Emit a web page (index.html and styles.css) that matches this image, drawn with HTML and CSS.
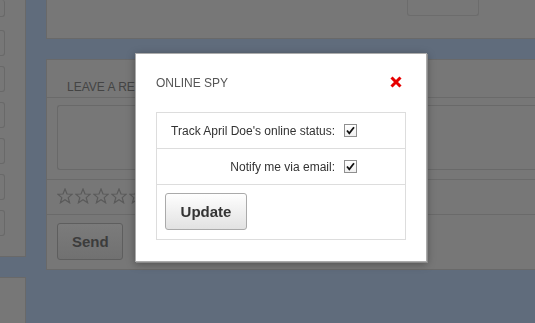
FILE: index.html
```html
<!DOCTYPE html>
<html lang="en">

<head>
    <meta charset="UTF-8">
    <meta name="viewport" content="width=device-width, initial-scale=1.0">
    <title>Online Spy</title>
    <link rel="stylesheet" href="styles.css">
</head>

<body>
    <div class="page">
        <aside class="side">
            <div class="side-panel">
                <div class="field"></div>
                <div class="field"></div>
                <div class="field"></div>
                <div class="field"></div>
                <div class="field"></div>
                <div class="field"></div>
                <div class="field"></div>
            </div>
            <div class="side-panel-low"></div>
        </aside>
        <main class="main">
            <div class="panel panel-top">
                <div class="top-btn"></div>
            </div>
            <div class="panel comments">
                <h3 class="comments-title">Leave a review</h3>
                <div class="comment-box">
                    <div class="textarea"></div>
                </div>
                <div class="stars">
                    <svg class="star" viewBox="0 0 16 16"><polygon points="8,1 10,6 15.2,6.2 11.2,9.6 12.6,14.8 8,11.8 3.4,14.8 4.8,9.6 0.8,6.2 6,6" /></svg>
                    <svg class="star" viewBox="0 0 16 16"><polygon points="8,1 10,6 15.2,6.2 11.2,9.6 12.6,14.8 8,11.8 3.4,14.8 4.8,9.6 0.8,6.2 6,6" /></svg>
                    <svg class="star" viewBox="0 0 16 16"><polygon points="8,1 10,6 15.2,6.2 11.2,9.6 12.6,14.8 8,11.8 3.4,14.8 4.8,9.6 0.8,6.2 6,6" /></svg>
                    <svg class="star" viewBox="0 0 16 16"><polygon points="8,1 10,6 15.2,6.2 11.2,9.6 12.6,14.8 8,11.8 3.4,14.8 4.8,9.6 0.8,6.2 6,6" /></svg>
                    <svg class="star" viewBox="0 0 16 16"><polygon points="8,1 10,6 15.2,6.2 11.2,9.6 12.6,14.8 8,11.8 3.4,14.8 4.8,9.6 0.8,6.2 6,6" /></svg>
                </div>
                <div class="send-row">
                    <button class="btn btn-send">Send</button>
                </div>
            </div>
        </main>
    </div>

    <div class="modal">
        <div class="modal-head">
            <span class="modal-title">Online Spy</span>
            <svg class="close" viewBox="0 0 12 12"><path d="M1.5 1.5 L10.5 10.5 M10.5 1.5 L1.5 10.5" /></svg>
        </div>
        <div class="opts">
            <div class="opt">
                <span class="opt-label">Track April Doe's online status:</span>
                <span class="check"><svg viewBox="0 0 11 11"><path d="M2 5.5 L4.3 8.3 L9 2.3" /></svg></span>
            </div>
            <div class="opt">
                <span class="opt-label">Notify me via email:</span>
                <span class="check"><svg viewBox="0 0 11 11"><path d="M2 5.5 L4.3 8.3 L9 2.3" /></svg></span>
            </div>
            <div class="opt opt-btn">
                <button class="btn btn-update">Update</button>
            </div>
        </div>
    </div>
</body>

</html>
```

FILE: styles.css
```css
body {
    margin: 0;
    background-color: #606c7c;
    font-family: "Liberation Sans", Arial, sans-serif;
}

.page {
    display: grid;
    grid-template-columns: 26px 1fr;
    column-gap: 20px;
    height: 323px;
    overflow: hidden;
}

/* left column, cut off by the window edge */
.side-panel {
    background-color: #777;
    border-right: 1px solid #696969;
    border-bottom: 1px solid #696969;
    height: 257px;
    box-sizing: border-box;
    padding-bottom: 20px;
    display: flex;
    flex-direction: column;
    gap: 10px;
}

.side-panel-low {
    margin-top: 20px;
    height: 46px;
    box-sizing: border-box;
    background-color: #777;
    border-top: 1px solid #696969;
    border-right: 1px solid #696969;
}

.field {
    width: 5px;
    height: 26px;
    box-sizing: border-box;
    border: 1px solid #696969;
    border-left: none;
    border-radius: 0 3px 3px 0;
}

.field:first-child {
    height: 17px;
    border-top: none;
    margin-bottom: 3px;
}

/* main column */
.panel {
    background-color: #777;
    border-left: 1px solid #696969;
    box-sizing: border-box;
}

.panel-top {
    height: 39px;
    border-bottom: 1px solid #696969;
}

.top-btn {
    margin-left: 360px;
    width: 72px;
    height: 16px;
    box-sizing: border-box;
    border: 1px solid #6c6c6c;
    border-top: none;
    border-radius: 0 0 3px 3px;
}

.comments {
    margin-top: 20px;
    border-top: 1px solid #696969;
    border-bottom: 1px solid #696969;
}

.comments-title {
    margin: 0;
    padding: 20px 0 3px 20px;
    font-size: 12px;
    line-height: 14px;
    font-weight: normal;
    text-transform: uppercase;
    color: #444;
    border-bottom: 1px solid #6a6a6a;
}

.comment-box {
    padding: 7px 0 9px 10px;
}

.textarea {
    height: 65px;
    box-sizing: border-box;
    border: 1px solid #696969;
    border-right: none;
    border-radius: 3px 0 0 3px;
}

.stars {
    border-top: 1px solid #6a6a6a;
    height: 35px;
    box-sizing: border-box;
    display: flex;
    gap: 2px;
    padding-left: 10px;
    padding-top: 8px;
}

.star {
    width: 16px;
    height: 16px;
    fill: none;
    stroke: #5a5a5a;
    stroke-width: 1.2;
}

.send-row {
    border-top: 1px solid #6a6a6a;
    padding: 8px 10px 9px 10px;
}

.btn {
    display: block;
    height: 37px;
    padding: 0 14px;
    font-family: "Liberation Sans", Arial, sans-serif;
    font-size: 15px;
    font-weight: bold;
    border-radius: 3px;
}

.btn-send {
    width: 66px;
    background: linear-gradient(#7b7b7b, #717171);
    border: 1px solid #5e5e5e;
    color: #3c3c3c;
}

/* modal */
.modal {
    position: fixed;
    left: 135px;
    top: 53px;
    width: 250px;
    height: 207px;
    padding: 0 20px;
    background-color: #fff;
    border: 1px solid #ababab;
    box-shadow: 1px 1px 0 #8a8a8a, 0 2px 8px rgba(0, 0, 0, 0.35);
}

.modal-head {
    display: flex;
    justify-content: space-between;
    align-items: flex-start;
    padding-top: 22px;
    height: 36px;
}

.modal-title {
    font-size: 12px;
    line-height: 14px;
    text-transform: uppercase;
    color: #555;
}

.close {
    width: 12px;
    height: 12px;
    margin-right: 4px;
    fill: none;
    stroke: #e60000;
    stroke-width: 3;
}

.opts {
    border: 1px solid #ddd;
}

.opt {
    display: flex;
    align-items: center;
    height: 35px;
    border-bottom: 1px solid #ddd;
    font-size: 12px;
    color: #333;
}

.opt-label {
    width: 178px;
    text-align: right;
    margin-right: 9px;
}

.check {
    width: 11px;
    height: 11px;
    border: 1px solid #8f8f8f;
    background: linear-gradient(#fff, #f0f0f0);
    display: flex;
}

.check svg {
    width: 11px;
    height: 11px;
    fill: none;
    stroke: #111;
    stroke-width: 1.8;
}

.opt-btn {
    height: 54px;
    border-bottom: none;
    padding-left: 8px;
}

.btn-update {
    width: 82px;
    margin-top: -1px;
    background: linear-gradient(#fefefe, #e2e2e2);
    border: 1px solid #aaa;
    color: #333;
}
```
